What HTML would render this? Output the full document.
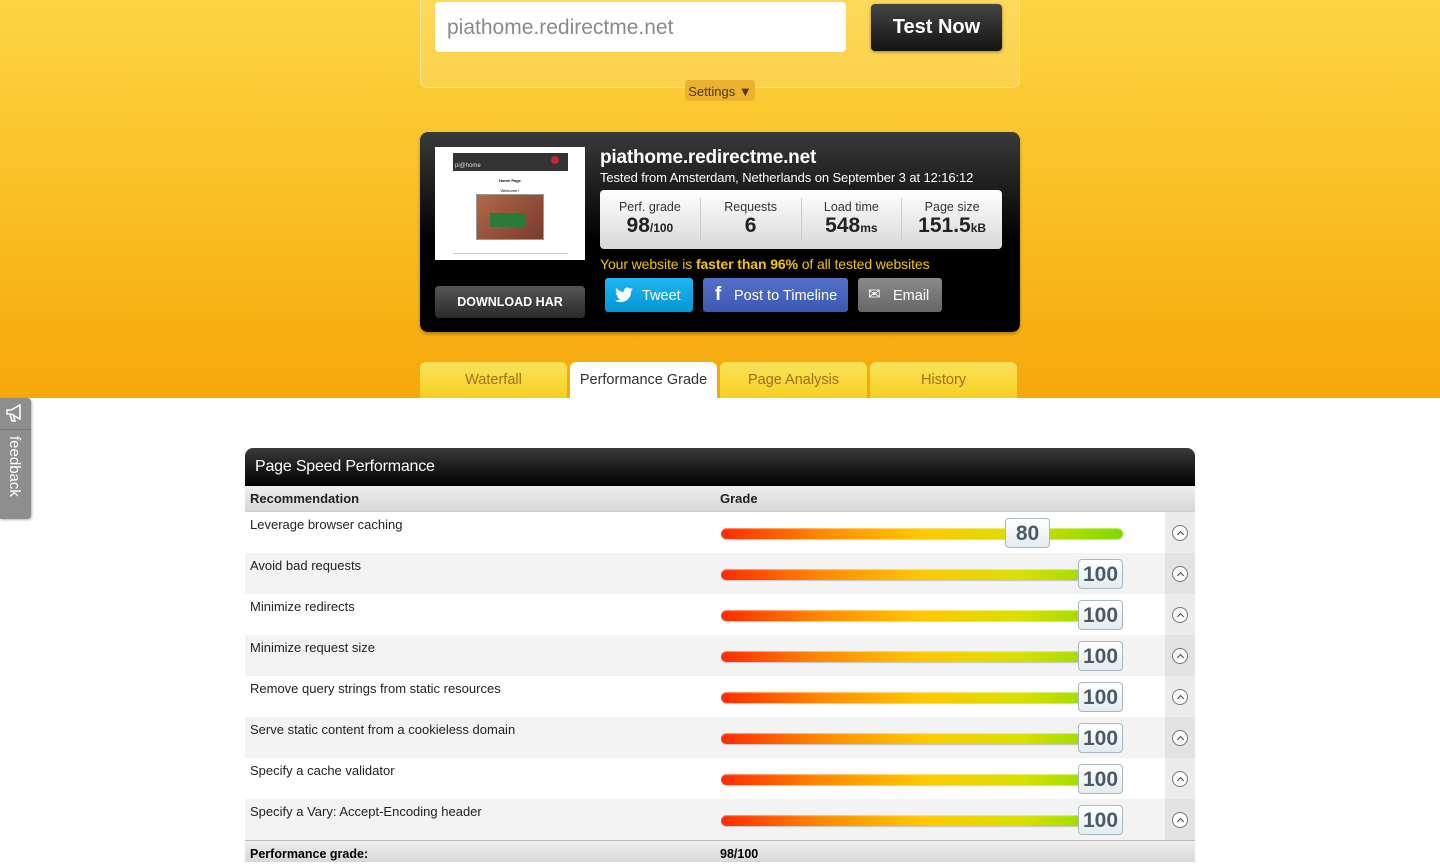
<!DOCTYPE html>
<html><head><meta charset="utf-8"><style>
*{box-sizing:border-box;margin:0;padding:0}
body{width:1440px;height:860px;overflow:hidden;font-family:"Liberation Sans",Arial,sans-serif;background:#fff;position:relative}
.top{position:absolute;left:0;top:0;width:1440px;height:398px;background:linear-gradient(#fdd443,#f9c024 50%,#f6a70b)}
.form{position:absolute;left:420px;top:-10px;width:600px;height:98px;border:1px solid rgba(255,255,255,.45);border-radius:8px;background:rgba(255,255,255,.12)}
.inp{position:absolute;left:435px;top:2px;width:411px;height:50px;background:#fff;border-radius:4px;color:#8a8a8a;font-size:21px;line-height:52px;padding-left:12px}
.btn{position:absolute;left:871px;top:4px;width:131px;height:47px;background:linear-gradient(#444,#151515);border-radius:4px;color:#fff;font-weight:bold;font-size:20px;text-align:center;line-height:47px;box-shadow:0 1px 3px rgba(0,0,0,.4)}
.set{position:absolute;left:685px;top:80px;width:70px;height:21px;background:#eab22e;border-radius:3px;font-size:13px;color:#4a3a10;text-align:center;line-height:23px}
.card{position:absolute;left:420px;top:132px;width:600px;height:200px;border-radius:8px;background:linear-gradient(#3a3a3a,#000 55%,#000);box-shadow:0 2px 3px rgba(0,0,0,.3)}
.thumb{position:absolute;left:435px;top:147px;width:150px;height:113px;background:#fff}
.har{position:absolute;left:435px;top:286px;width:150px;height:32px;border-radius:4px;background:linear-gradient(#555,#2a2a2a);color:#fff;font-weight:bold;font-size:12.5px;text-align:center;line-height:32px}
.h1{position:absolute;left:600px;top:147px;color:#fff;font-weight:bold;font-size:19px;letter-spacing:-.2px}
.h2{position:absolute;left:600px;top:170px;color:#fff;font-size:13px;letter-spacing:-.1px}
.stats{position:absolute;left:600px;top:190px;width:402px;height:59px;border-radius:4px;background:linear-gradient(#fff,#d8d8d8);display:flex}
.st{flex:1;text-align:center;color:#333;border-right:1px solid #ccc;margin:8px 0;padding-top:4px}
.st:last-child{border:none}
.st span{display:block;font-size:12.5px;margin-top:-2px}
.st b{display:block;font-size:21px;color:#222;line-height:24px}
.st b small{font-size:12px}
.fast{position:absolute;left:600px;top:256px;color:#f5c400;font-size:14px;letter-spacing:-.1px;font-weight:bold;font-weight:500}
.sb{position:absolute;top:278px;height:34px;border-radius:3px;color:#fff;font-size:14.5px;line-height:34px}
.tab{position:absolute;top:362px;width:147px;height:36px;border-radius:6px 6px 0 0;background:linear-gradient(#fbe35a,#f7cf22);color:#9a7218;font-size:14.5px;text-align:center;line-height:37px}
.fb{position:absolute;left:0;top:398px;width:31px;height:121px;background:#8e8e8e;border-radius:0 4px 4px 0;box-shadow:1px 1px 2px rgba(0,0,0,.3)}
.fb div{position:absolute;left:6px;top:38px;writing-mode:vertical-rl;color:#fff;font-size:15px}
.tbl{position:absolute;left:245px;top:448px;width:950px}
.tt{height:38px;border-radius:8px 8px 0 0;background:linear-gradient(#3a3a3a,#000);color:#fff;font-size:16px;line-height:38px;padding-left:10px;letter-spacing:-.2px}
.th{height:26px;background:linear-gradient(#eee,#d8d8d8);font-weight:bold;font-size:13px;color:#222;line-height:22px;position:relative;border-bottom:1px solid #ccc}
.row{height:41px;position:relative;font-size:13px;color:#222}
.row .l{position:absolute;left:5px;top:5px}
.row .ic{position:absolute;left:920px;top:0;width:30px;height:41px}
.ic i{position:absolute;left:7px;top:13px;width:16px;height:16px;border:1px solid #777;border-radius:50%;background:#fafafa}
.ic i:after{content:"";position:absolute;left:4.5px;top:5.5px;width:4px;height:4px;border-left:1.5px solid #444;border-top:1.5px solid #444;transform:rotate(45deg)}
.bar{position:absolute;left:476px;top:16px;width:402px;height:11px;border-radius:6px;background:linear-gradient(90deg,#ff2a00,#ff8a00 25%,#ffc800 50%,#d8e000 75%,#80d800);box-shadow:inset 0 1px 1px rgba(255,255,255,.5),0 1px 1px rgba(0,0,0,.2)}
.bd{position:absolute;top:6px;height:30px;width:45px;border:1px solid #a8b8c0;border-radius:4px;background:linear-gradient(#fff,#e4ecf0);color:#4b5a66;font-weight:bold;font-size:21px;text-align:center;line-height:30px}
.ft{height:22px;background:linear-gradient(#eee,#d8d8d8);border-top:1px solid #bbb;font-weight:bold;font-size:12.5px;position:relative;line-height:26px}
</style></head><body>
<div class="top"></div>
<div class="form"></div>
<div class="inp">piathome.redirectme.net</div>
<div class="btn">Test Now</div>
<div class="set">Settings ▼</div>
<div class="card"></div>
<div class="thumb">
 <div style="position:absolute;left:18px;top:6px;width:115px;height:18px;background:#333"></div>
 <div style="position:absolute;left:20px;top:16px;color:#ddd;font-size:6px">pi@home</div>
 <div style="position:absolute;left:116px;top:9px;width:8px;height:8px;background:#c0283a;border-radius:50%"></div>
 <div style="position:absolute;left:0;top:31px;width:150px;text-align:center;font-size:4px;font-weight:bold">Home Page</div>
 <div style="position:absolute;left:0;top:41px;width:150px;text-align:center;font-size:4px">Welcome !</div>
 <div style="position:absolute;left:41px;top:47px;width:68px;height:46px;background:linear-gradient(135deg,#b06a4a,#7a3a2a);border:1px solid #999"></div>
 <div style="position:absolute;left:55px;top:66px;width:35px;height:14px;background:#2c7a3a"></div>
 <div style="position:absolute;left:18px;top:106px;width:115px;height:1px;background:#ccc"></div>
</div>
<div class="har">DOWNLOAD HAR</div>
<div class="h1">piathome.redirectme.net</div>
<div class="h2">Tested from Amsterdam, Netherlands on September 3 at 12:16:12</div>
<div class="stats">
 <div class="st"><span>Perf. grade</span><b>98<small>/100</small></b></div>
 <div class="st"><span>Requests</span><b>6</b></div>
 <div class="st"><span>Load time</span><b>548<small>ms</small></b></div>
 <div class="st"><span>Page size</span><b>151.5<small>kB</small></b></div>
</div>
<div class="fast">Your website is <b>faster than 96%</b> of all tested websites</div>
<div class="sb" style="left:605px;width:88px;background:linear-gradient(#1cb6f0,#0396d4)"><svg style="position:absolute;left:10px;top:9px" width="18" height="16" viewBox="0 0 24 20"><path fill="#fff" d="M24 2.4a10 10 0 0 1-2.8.8A5 5 0 0 0 23.3.5a10 10 0 0 1-3.1 1.2A4.9 4.9 0 0 0 11.8 6 14 14 0 0 1 1.7.9a4.9 4.9 0 0 0 1.5 6.6A4.9 4.9 0 0 1 1 6.9a4.9 4.9 0 0 0 3.9 4.8 5 5 0 0 1-2.2.1 4.9 4.9 0 0 0 4.6 3.4A9.9 9.9 0 0 1 0 17.3 14 14 0 0 0 7.5 19.5c9.1 0 14-7.5 14-14v-.6A10 10 0 0 0 24 2.4z"/></svg><span style="position:absolute;left:37px;top:1px">Tweet</span></div>
<div class="sb" style="left:703px;width:145px;background:linear-gradient(#5570c8,#3d58b0)"><span style="position:absolute;left:12px;font-weight:bold;font-size:19px">f</span><span style="position:absolute;left:31px;top:1px">Post to Timeline</span></div>
<div class="sb" style="left:858px;width:84px;background:linear-gradient(#8a8a8a,#666)"><span style="position:absolute;left:10px;font-size:15px">✉</span><span style="position:absolute;left:35px;top:1px">Email</span></div>
<div class="tab" style="left:420px">Waterfall</div>
<div class="tab" style="left:570px;background:#fff;color:#333">Performance Grade</div>
<div class="tab" style="left:720px">Page Analysis</div>
<div class="tab" style="left:870px">History</div>
<div class="fb"><svg style="position:absolute;left:4px;top:4px" width="22" height="22" viewBox="0 0 22 22"><path d="M3 8h4l9-5v14l-9-5H3z M6 12l2 7h3l-2-7" fill="none" stroke="#fff" stroke-width="1.5"/></svg><div style="position:absolute;left:0;top:31px;width:31px;height:1px;background:#777;writing-mode:horizontal-tb"></div><div>feedback</div></div>
<div class="tbl">
 <div class="tt">Page Speed Performance</div>
 <div class="th"><span style="position:absolute;left:5px;top:2px">Recommendation</span><span style="position:absolute;left:475px;top:2px">Grade</span></div>
 <div>
 <div class="row" style="background:#fff"><span class="l">Leverage browser caching</span><div class="bar"></div><div class="bd" style="left:760px">80</div><div class="ic" style="background:#ececec"><i></i></div></div>
 <div class="row" style="background:#f3f3f3"><span class="l">Avoid bad requests</span><div class="bar"></div><div class="bd" style="left:833px">100</div><div class="ic" style="background:#e3e3e3"><i></i></div></div>
 <div class="row" style="background:#fff"><span class="l">Minimize redirects</span><div class="bar"></div><div class="bd" style="left:833px">100</div><div class="ic" style="background:#ececec"><i></i></div></div>
 <div class="row" style="background:#f3f3f3"><span class="l">Minimize request size</span><div class="bar"></div><div class="bd" style="left:833px">100</div><div class="ic" style="background:#e3e3e3"><i></i></div></div>
 <div class="row" style="background:#fff"><span class="l">Remove query strings from static resources</span><div class="bar"></div><div class="bd" style="left:833px">100</div><div class="ic" style="background:#ececec"><i></i></div></div>
 <div class="row" style="background:#f3f3f3"><span class="l">Serve static content from a cookieless domain</span><div class="bar"></div><div class="bd" style="left:833px">100</div><div class="ic" style="background:#e3e3e3"><i></i></div></div>
 <div class="row" style="background:#fff"><span class="l">Specify a cache validator</span><div class="bar"></div><div class="bd" style="left:833px">100</div><div class="ic" style="background:#ececec"><i></i></div></div>
 <div class="row" style="background:#f3f3f3"><span class="l">Specify a Vary: Accept-Encoding header</span><div class="bar"></div><div class="bd" style="left:833px">100</div><div class="ic" style="background:#e3e3e3"><i></i></div></div>
 </div>
 <div class="ft"><span style="position:absolute;left:5px">Performance grade:</span><span style="position:absolute;left:475px">98/100</span></div>
</div>
</body></html>
